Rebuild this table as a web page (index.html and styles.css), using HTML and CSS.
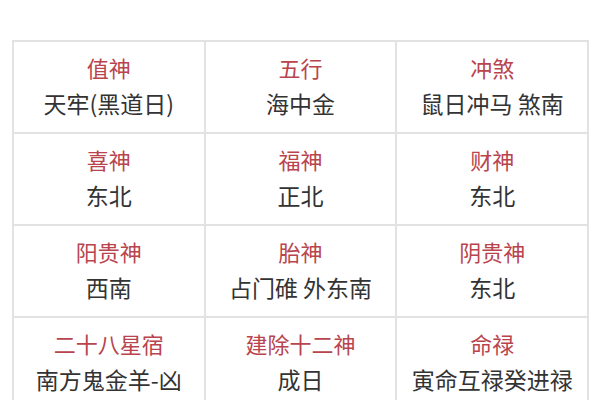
FILE: index.html
```html
<!DOCTYPE html>
<html lang="zh">
<head>
<meta charset="utf-8">
<link rel="stylesheet" href="styles.css">
</head>
<body>
<div class="page">
  <table class="almanac">
    <tr>
      <td><div class="label">值神</div><div class="value">天牢(黑道日)</div></td>
      <td><div class="label">五行</div><div class="value">海中金</div></td>
      <td><div class="label">冲煞</div><div class="value">鼠日冲马 煞南</div></td>
    </tr>
    <tr>
      <td><div class="label">喜神</div><div class="value">东北</div></td>
      <td><div class="label">福神</div><div class="value">正北</div></td>
      <td><div class="label">财神</div><div class="value">东北</div></td>
    </tr>
    <tr>
      <td><div class="label">阳贵神</div><div class="value">西南</div></td>
      <td><div class="label">胎神</div><div class="value">占门碓 外东南</div></td>
      <td><div class="label">阴贵神</div><div class="value">东北</div></td>
    </tr>
    <tr>
      <td><div class="label">二十八星宿</div><div class="value">南方鬼金羊-凶</div></td>
      <td><div class="label">建除十二神</div><div class="value">成日</div></td>
      <td><div class="label">命禄</div><div class="value">寅命互禄癸进禄</div></td>
    </tr>
  </table>
</div>
</body>
</html>
```
FILE: styles.css
```css
html, body {
  margin: 0;
  padding: 0;
  background: #ffffff;
  overflow: hidden;
}
.page {
  padding: 40px 0 0 12px;
  font-family: "Noto Sans CJK SC", "Noto Sans", sans-serif;
}
.almanac {
  border-collapse: collapse;
  width: 577px;
  table-layout: fixed;
}
.almanac td {
  border: 2px solid #e2e2e2;
  height: 85px;
  padding: 0 0 5px;
  text-align: center;
  vertical-align: middle;
}
.label {
  color: #b9444d;
  font-size: 22px;
  line-height: 36px;
}
.value {
  color: #333333;
  font-size: 23px;
  line-height: 36px;
}
```
